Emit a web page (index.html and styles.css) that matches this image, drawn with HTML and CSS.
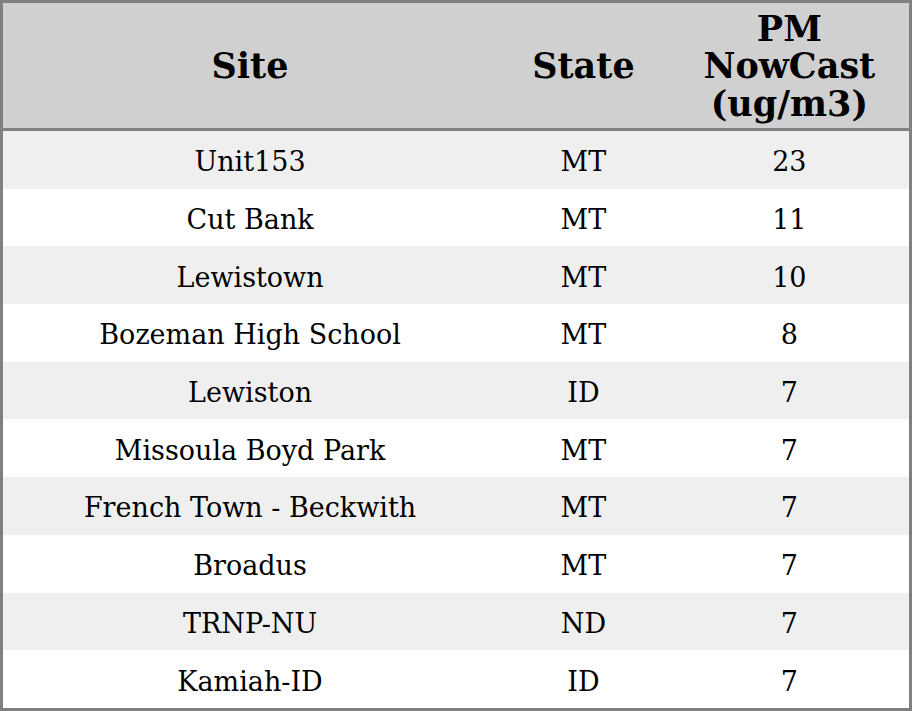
FILE: index.html
```html
<!DOCTYPE html>
<html>
<head>
<meta charset="utf-8">
<link rel="stylesheet" href="styles.css">
</head>
<body>
<table class="aq">
  <colgroup>
    <col class="c-site"><col class="c-state"><col class="c-pm">
  </colgroup>
  <thead>
    <tr><th>Site</th><th>State</th><th>PM<br>NowCast<br>(ug/m3)</th></tr>
  </thead>
  <tbody>
    <tr><td>Unit153</td><td>MT</td><td>23</td></tr>
    <tr><td>Cut Bank</td><td>MT</td><td>11</td></tr>
    <tr><td>Lewistown</td><td>MT</td><td>10</td></tr>
    <tr><td>Bozeman High School</td><td>MT</td><td>8</td></tr>
    <tr><td>Lewiston</td><td>ID</td><td>7</td></tr>
    <tr><td>Missoula Boyd Park</td><td>MT</td><td>7</td></tr>
    <tr><td>French Town - Beckwith</td><td>MT</td><td>7</td></tr>
    <tr><td>Broadus</td><td>MT</td><td>7</td></tr>
    <tr><td>TRNP-NU</td><td>ND</td><td>7</td></tr>
    <tr><td>Kamiah-ID</td><td>ID</td><td>7</td></tr>
  </tbody>
</table>
</body>
</html>
```
FILE: styles.css
```css
html, body {
  margin: 0;
  padding: 0;
  background: #ffffff;
}
.aq {
  width: 912px;
  height: 711px;
  border-collapse: collapse;
  border: 3px solid #808080;
  font-family: "DejaVu Serif", serif;
  color: #000;
  table-layout: fixed;
}
.c-site { width: 494px; }
.c-state { width: 172px; }
.c-pm { width: 240px; }
.aq th {
  background: #d0d0d0;
  font-size: 35px;
  font-weight: bold;
  line-height: 37.5px;
  height: 124px;
  padding: 1px 0 0 0;
  text-align: center;
  vertical-align: middle;
  border-bottom: 3px solid #808080;
}
.aq td {
  font-size: 27px;
  text-align: center;
  vertical-align: middle;
  padding: 4px 0 0 0;
  height: 53.7px;
}
.aq tbody tr:nth-child(odd) td {
  background: #efefef;
}
```
